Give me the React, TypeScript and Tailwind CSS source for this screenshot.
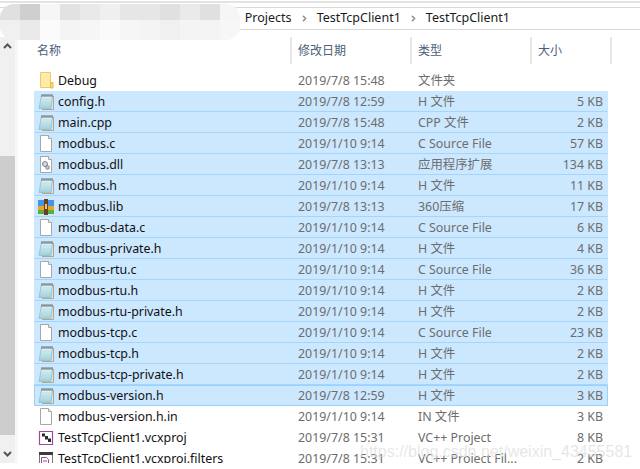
import { ChevronRight } from "lucide-react";

type Kind = "folder" | "note" | "page" | "dll" | "rar" | "proj" | "filter";

interface FileRow {
  name: string;
  date: string;
  type: string;
  size: string;
  kind: Kind;
  selected?: boolean;
  focused?: boolean;
}

const rows: FileRow[] = [
  { name: "Debug", date: "2019/7/8 15:48", type: "文件夹", size: "", kind: "folder" },
  { name: "config.h", date: "2019/7/8 12:59", type: "H 文件", size: "5 KB", kind: "note", selected: true },
  { name: "main.cpp", date: "2019/7/8 15:48", type: "CPP 文件", size: "2 KB", kind: "note", selected: true },
  { name: "modbus.c", date: "2019/1/10 9:14", type: "C Source File", size: "57 KB", kind: "page", selected: true },
  { name: "modbus.dll", date: "2019/7/8 13:13", type: "应用程序扩展", size: "134 KB", kind: "dll", selected: true },
  { name: "modbus.h", date: "2019/1/10 9:14", type: "H 文件", size: "11 KB", kind: "note", selected: true },
  { name: "modbus.lib", date: "2019/7/8 13:13", type: "360压缩", size: "17 KB", kind: "rar", selected: true },
  { name: "modbus-data.c", date: "2019/1/10 9:14", type: "C Source File", size: "6 KB", kind: "page", selected: true },
  { name: "modbus-private.h", date: "2019/1/10 9:14", type: "H 文件", size: "4 KB", kind: "note", selected: true },
  { name: "modbus-rtu.c", date: "2019/1/10 9:14", type: "C Source File", size: "36 KB", kind: "page", selected: true },
  { name: "modbus-rtu.h", date: "2019/1/10 9:14", type: "H 文件", size: "2 KB", kind: "note", selected: true },
  { name: "modbus-rtu-private.h", date: "2019/1/10 9:14", type: "H 文件", size: "2 KB", kind: "note", selected: true },
  { name: "modbus-tcp.c", date: "2019/1/10 9:14", type: "C Source File", size: "23 KB", kind: "page", selected: true },
  { name: "modbus-tcp.h", date: "2019/1/10 9:14", type: "H 文件", size: "2 KB", kind: "note", selected: true },
  { name: "modbus-tcp-private.h", date: "2019/1/10 9:14", type: "H 文件", size: "2 KB", kind: "note", selected: true },
  { name: "modbus-version.h", date: "2019/7/8 12:59", type: "H 文件", size: "3 KB", kind: "note", selected: true, focused: true },
  { name: "modbus-version.h.in", date: "2019/1/10 9:14", type: "IN 文件", size: "3 KB", kind: "page" },
  { name: "TestTcpClient1.vcxproj", date: "2019/7/8 15:31", type: "VC++ Project", size: "8 KB", kind: "proj" },
  { name: "TestTcpClient1.vcxproj.filters", date: "2019/7/8 15:31", type: "VC++ Project Fil...", size: "2 KB", kind: "filter" },
];

const mosaicTop = ["#e0e0e0", "#cfcfcf", "#f6f6f6", "#e2e2e2", "#e9e9e9", "#efefef", "#e6e6e6", "#e6e6e6", "#e0e0e0", "#eaeaea", "#e0e0e0", "#f6f6f6"];
const mosaicBottom = ["#f0f0f0", "#eaeaea", "#fbfbfb", "#f4f4f4", "#f6f6f6", "#fafafa", "#f6f6f6", "#f4f4f4", "#f0f0f0", "#f4f4f4", "#f4f4f4", "#f7f7f7"];

function FileIcon({ kind }: { kind: Kind }) {
  if (kind === "folder") {
    return (
      <svg width="16" height="17" viewBox="0 0 16 17">
        <path d="M2.500.5h10v15h-10z" fill="#ffeaa6" stroke="#ecca6c" />
        <path d="M12.500 10.500h2.500v5.500h-2.500z" fill="#ffd863" stroke="#e6bd52" />
      </svg>
    );
  }
  if (kind === "note") {
    return (
      <svg width="16" height="16" viewBox="0 0 16 16">
        <defs>
          <linearGradient id="noteFill" x1="0" y1="0" x2="0" y2="1">
            <stop offset="0" stopColor="#e6f5f7" />
            <stop offset="1" stopColor="#9bd0db" />
          </linearGradient>
        </defs>
        <path d="M4 15.500h11.500V2" fill="none" stroke="#b7a583" />
        <path d="M3.500 1.500H14.500L13 14.500H1z" fill="url(#noteFill)" stroke="#9cc4cf" />
        <path d="M3.500 5h9.500M3.200 8h9.500M2.800 11h9.500" stroke="#b5dce4" strokeWidth="0.7" />
        <path d="M4 0v3M6 0v3M8 0v3M10 0v3M12 0v3M14 0v3" stroke="#555" strokeWidth="0.8" />
      </svg>
    );
  }
  if (kind === "proj") {
    return (
      <svg width="16" height="16" viewBox="0 0 16 16">
        <path d="M1.500 1.500h13v13h-13z" fill="#fff" stroke="#a1469f" strokeWidth="1.200" />
        <path d="M4 3.500h3v3h-3z M7 6h3v3.500H7z M10 8.500h3v3.500h-3z" fill="#2b2b2b" />
      </svg>
    );
  }
  if (kind === "filter") {
    return (
      <svg width="16" height="16" viewBox="0 0 16 16">
        <path d="M1.500 1.500h13v14h-13z" fill="#fff" stroke="#777" />
        <path d="M1 1h14v3H1z" fill="#3c3c3c" />
        <path d="M3.500 6.500h5l2 2v6h-7z" fill="#fff" stroke="#a1469f" />
        <path d="M5 10h4M5 12.500h4" stroke="#a1469f" />
      </svg>
    );
  }
  if (kind === "rar") {
    return (
      <svg width="16" height="16" viewBox="0 0 16 16">
        <path d="M0 1h16v6H0z" fill="#3f97e6" />
        <path d="M0 7h16v4H0z" fill="#e8a32c" />
        <path d="M0 11h16v4H0z" fill="#5cae3c" />
        <path d="M6 0h4v16H6z" fill="#6b3f1d" />
        <path d="M7 5h2v5H7z" fill="#e9c767" />
      </svg>
    );
  }
  return (
    <svg width="16" height="17" viewBox="0 0 16 17">
      <path d="M2.500.5h8l3 3v13h-11z" fill="#fff" stroke="#a8a8a8" />
      <path d="M10.500.5v3h3" fill="#f0f0f0" stroke="#a8a8a8" />
      {kind === "dll" && (
        <>
          <circle cx="7" cy="8" r="2.500" fill="#d8d8e0" stroke="#7a8090" />
          <circle cx="9.500" cy="11.500" r="1.800" fill="#c8ccd8" stroke="#7a8090" />
        </>
      )}
    </svg>
  );
}

function Row({ row }: { row: FileRow }) {
  const bg = row.focused
    ? "border border-[#99d1ff] bg-[#cce8ff]"
    : row.selected
      ? "border border-[#cce8ff] border-b-[#a5d5fc] bg-[#cce8ff]"
      : "border border-transparent";
  return (
    <div className={`flex h-[21px] w-[574px] shrink-0 items-center text-[12.4px] leading-none ${bg}`}>
      <span className="ml-[3px] flex w-[19px] shrink-0 items-center">
        <FileIcon kind={row.kind} />
      </span>
      <span className="w-[241px] shrink-0 whitespace-nowrap pl-[1px] pt-[2px] text-[#111]">{row.name}</span>
      <span className="w-[120px] shrink-0 whitespace-nowrap pt-[2px] text-[#6d6d6d]">{row.date}</span>
      <span className="w-[120px] shrink-0 whitespace-nowrap pt-[2px] text-[#6d6d6d]">{row.type}</span>
      <span className="w-[65px] shrink-0 whitespace-nowrap pt-[2px] text-right text-[#6d6d6d]">{row.size}</span>
    </div>
  );
}

function HeaderCell({ label, width }: { label: string; width: string }) {
  return (
    <div className={`flex h-[27px] shrink-0 items-center border-r-2 border-[#e8e8e8] text-[12px] text-[#4c607a] ${width}`}>
      {label}
    </div>
  );
}

export default function App() {
  return (
    <div
      className="relative flex h-[469px] w-[640px] flex-col overflow-hidden bg-white"
      style={{ fontFamily: '"Noto Sans", "Noto Sans CJK SC", sans-serif' }}
    >
      <div className="mt-[1px] h-[2px] shrink-0 bg-[#e3e3e3]" />
      <div className="mt-[4px] flex h-[23px] shrink-0 items-center justify-end border-y border-[#d9d9d9] pr-[130px] text-[12.5px] text-[#1a1a1a]">
        <span>Projects</span>
        <ChevronRight className="mx-[8px] h-[9px] w-[9px] text-[#888]" strokeWidth={4} />
        <span>TestTcpClient1</span>
        <ChevronRight className="mx-[8px] h-[9px] w-[9px] text-[#888]" strokeWidth={4} />
        <span>TestTcpClient1</span>
      </div>

      {/* the shot is cut off 6px above the window bottom */}
      <div className="mb-[6px] mt-[7px] flex min-h-0 flex-1 overflow-hidden">
        <div className="flex w-[15px] shrink-0 flex-col items-center bg-[#f0f0f0]">
          <svg className="mt-[6px]" width="9" height="6" viewBox="0 0 9 6">
            <path d="M1 5l3.500-3.500L8 5" fill="none" stroke="#555" strokeWidth="2" />
          </svg>
        </div>
        <div className="w-[3px] shrink-0 bg-[#f8f8f8]" />
        <div className="ml-[16px] flex min-w-0 flex-1 flex-col">
          <div className="flex shrink-0">
            <HeaderCell label="名称" width="w-[258px] pl-[3px]" />
            <HeaderCell label="修改日期" width="w-[120px] pl-[6px]" />
            <HeaderCell label="类型" width="w-[120px] pl-[6px]" />
            <HeaderCell label="大小" width="w-[80px] pl-[6px]" />
          </div>
          <div className="mt-[6px] flex flex-col">
            {rows.map((row) => (
              <Row key={row.name} row={row} />
            ))}
          </div>
        </div>
      </div>

      {/* scrollbar thumb and arrow lie over the track */}
      <div className="absolute left-0 top-[156px] h-[279px] w-[15px] bg-[#cdcdcd]" />
      <svg className="absolute left-[3px] top-[451px]" width="9" height="6" viewBox="0 0 9 6">
        <path d="M1 1l3.500 3.500L8 1" fill="none" stroke="#555" strokeWidth="2" />
      </svg>

      {/* mosaic over the address bar */}
      <div className="absolute left-0 top-[4px] w-[240px] overflow-hidden rounded-[14px]">
        <div className="flex">
          {mosaicTop.map((c, i) => (
            <div key={i} className="h-[16px] w-[20px] shrink-0" style={{ background: c }} />
          ))}
        </div>
        <div className="flex">
          {mosaicBottom.map((c, i) => (
            <div key={i} className="h-[20px] w-[20px] shrink-0" style={{ background: c }} />
          ))}
        </div>
      </div>

      {/* csdn watermark */}
      <div
        className="pointer-events-none absolute left-[360px] top-[440px] whitespace-nowrap text-[16px] text-[#dcdcdc]/70"
        style={{ fontFamily: '"Liberation Sans", sans-serif' }}
      >
        https://blog.csdn.net/weixin_43455581
      </div>
    </div>
  );
}
